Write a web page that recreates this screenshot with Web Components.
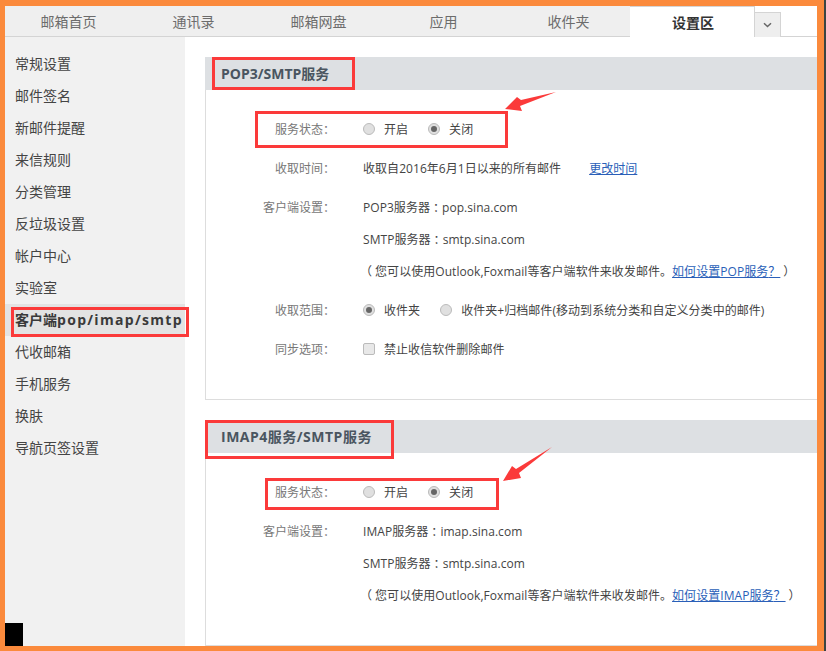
<!DOCTYPE html>
<html lang="zh">
<head>
<meta charset="utf-8">
<title>客户端pop/imap/smtp</title>
<style>
  html, body { margin: 0; padding: 0; }
  body { font: 12px "Open Sans", "Noto Sans CJK SC", sans-serif; color: #444; }
</style>
</head>
<body>
<mail-frame>
  <tab-bar slot="tabs">
    <tab-item>邮箱首页</tab-item>
    <tab-item>通讯录</tab-item>
    <tab-item>邮箱网盘</tab-item>
    <tab-item>应用</tab-item>
    <tab-item>收件夹</tab-item>
    <tab-item active>设置区</tab-item>
  </tab-bar>

  <side-nav slot="side">
    <nav-item>常规设置</nav-item>
    <nav-item>邮件签名</nav-item>
    <nav-item>新邮件提醒</nav-item>
    <nav-item>来信规则</nav-item>
    <nav-item>分类管理</nav-item>
    <nav-item>反垃圾设置</nav-item>
    <nav-item>帐户中心</nav-item>
    <nav-item>实验室</nav-item>
    <nav-item active>客户端<wide-text>pop/imap/smtp</wide-text></nav-item>
    <nav-item>代收邮箱</nav-item>
    <nav-item>手机服务</nav-item>
    <nav-item>换肤</nav-item>
    <nav-item>导航页签设置</nav-item>
  </side-nav>

  <settings-section title="POP3/SMTP服务">
    <setting-row label="服务状态">
      <set-line><radio-opt>开启</radio-opt><radio-opt checked>关闭</radio-opt></set-line>
    </setting-row>
    <setting-row label="收取时间">
      <set-line>收取自2016年6月1日以来的所有邮件<text-link gap="28">更改时间</text-link></set-line>
    </setting-row>
    <setting-row label="客户端设置">
      <set-line>POP3服务器<mid-mark>：</mid-mark>pop.sina.com</set-line>
      <set-line>SMTP服务器<mid-mark>：</mid-mark>smtp.sina.com</set-line>
      <set-line><paren-mark>（</paren-mark>您可以使用Outlook,Foxmail等客户端软件来收发邮件。<text-link>如何设置POP服务<mid-mark>？</mid-mark></text-link><paren-mark>）</paren-mark></set-line>
    </setting-row>
    <setting-row label="收取范围">
      <set-line><radio-opt checked>收件夹</radio-opt><radio-opt>收件夹+归档邮件(移动到系统分类和自定义分类中的邮件)</radio-opt></set-line>
    </setting-row>
    <setting-row label="同步选项">
      <set-line><check-opt>禁止收信软件删除邮件</check-opt></set-line>
    </setting-row>
  </settings-section>

  <settings-section title="IMAP4服务/SMTP服务" style="--title-spacing: .5px">
    <setting-row label="服务状态">
      <set-line><radio-opt>开启</radio-opt><radio-opt checked>关闭</radio-opt></set-line>
    </setting-row>
    <setting-row label="客户端设置">
      <set-line>IMAP服务器<mid-mark>：</mid-mark>imap.sina.com</set-line>
      <set-line>SMTP服务器<mid-mark>：</mid-mark>smtp.sina.com</set-line>
      <set-line><paren-mark>（</paren-mark>您可以使用Outlook,Foxmail等客户端软件来收发邮件。<text-link>如何设置IMAP服务<mid-mark>？</mid-mark></text-link><paren-mark>）</paren-mark></set-line>
    </setting-row>
  </settings-section>

  <!-- red markup drawn over the screenshot -->
  <note-box slot="notes" x="212" y="57" w="143" h="33"></note-box>
  <note-box slot="notes" x="255" y="111" w="253" h="37"></note-box>
  <note-box slot="notes" x="11" y="307" w="178" h="30"></note-box>
  <note-box slot="notes" x="205" y="420" w="188.5" h="39"></note-box>
  <note-box slot="notes" x="265" y="478" w="234" h="32"></note-box>
  <note-arrow slot="notes" points="505,109 517,97 521,100 556,92 520,106 522,111"></note-arrow>
  <note-arrow slot="notes" points="503,481 512,466 516,469 552,447 519,473 521,478"></note-arrow>
</mail-frame>

<script>
// small helper so each class only has to say what its shadow root holds
class BaseElement extends HTMLElement {
  get html() { return `<slot></slot>`; }
  get css() { return ``; }

  constructor() {
    super();
    this.root = this.attachShadow({ mode: 'open' });
  }

  connectedCallback() {
    this.root.innerHTML = `<style>${this.css}</style>` + this.html;
  }
}

class MailFrame extends BaseElement {
  get css() {
    return `
      :host { display: block; position: relative; box-sizing: border-box; width: 826px; height: 651px;
        padding: 6px 7px 5px 5px; background: #fb8a3c; border-right: 2px solid #3c4442; overflow: hidden; }
      .page { display: flex; flex-direction: column; height: 100%; background: #fff; }
      .body { flex: 1; display: flex; min-height: 0; }
      main { flex: 1; min-width: 0; padding: 20px 0 0 20px; display: flex; flex-direction: column; gap: 20px; }
    `;
  }
  get html() {
    return `
      <div class="page">
        <slot name="tabs"></slot>
        <div class="body">
          <slot name="side"></slot>
          <main><slot></slot></main>
        </div>
      </div>
      <slot name="notes"></slot>
    `;
  }
}

class TabBar extends BaseElement {
  get css() {
    return `
      :host { display: flex; height: 31px; box-sizing: border-box; border-bottom: 1px solid #d4d4d4; }
      .more { width: 26px; height: 25px; margin-top: 6px; box-sizing: border-box; background: #eee;
        border: 1px solid #d4d4d4; border-left: 0; border-bottom: 0; display: flex; align-items: center; justify-content: center; }
    `;
  }
  get html() {
    return `<slot></slot>
      <div class="more"><svg width="9" height="6" viewBox="0 0 9 6"><path d="M1 1.2 L4.5 4.5 L8 1.2" fill="none" stroke="#666" stroke-width="1.5"/></svg></div>`;
  }
}

class TabItem extends BaseElement {
  get css() {
    return `
      :host { display: flex; align-items: center; justify-content: center; width: 125px; height: 30px;
        box-sizing: border-box; padding-left: 2px; background: #efefef; color: #6c6c6c; font-size: 14px; }
      :host([active]) { background: #fff; color: #333; font-weight: bold; border-right: 1px solid #d4d4d4;
        border-top: 1px solid #d4d4d4; height: 31px; }
    `;
  }
}

class SideNav extends BaseElement {
  get css() {
    return `
      :host { display: flex; flex-direction: column; width: 180px; flex: none; box-sizing: border-box;
        padding-top: 11px; background: #f1f1f1; }
      .stub { margin-top: auto; width: 18px; height: 23px; background: #000; }
    `;
  }
  get html() { return `<slot></slot><div class="stub"></div>`; }
}

class NavItem extends BaseElement {
  get css() {
    return `
      :host { display: flex; align-items: center; height: 32px; box-sizing: border-box; padding: 0 0 2px 10px;
        font-size: 14px; color: #444; white-space: nowrap; }
      :host([active]) { background: #e3e3e3; font-weight: bold; color: #3a3a3a; }
    `;
  }
}

class WideText extends BaseElement {
  get css() {
    return `:host { letter-spacing: 1.3px; }`;
  }
}

class SettingsSection extends BaseElement {
  get css() {
    return `
      :host { display: block; }
      h2 { margin: 0; height: 33px; line-height: 34px; padding-left: 16px; background: #dde0e3; color: #4a5560;
        font-size: 14px; font-weight: bold; letter-spacing: var(--title-spacing, 0); }
      .box { display: flex; flex-direction: column; gap: 7px; padding: 23px 0 34px; border-left: 1px solid #ddd; border-bottom: 1px solid #ddd; }
    `;
  }
  get html() {
    return `<h2>${this.getAttribute('title')}</h2><div class="box"><slot></slot></div>`;
  }
}

class SettingRow extends BaseElement {
  get css() {
    return `
      :host { display: grid; grid-template-columns: 129px 1fr; column-gap: 28px; }
      .label { height: 32px; line-height: 32px; text-align: right; color: #777; }
      .label span { font-family: "Noto Sans CJK TC", sans-serif; }
    `;
  }
  get html() {
    return `<div class="label">${this.getAttribute('label')}<span>：</span></div><div><slot></slot></div>`;
  }
}

class SetLine extends BaseElement {
  get css() {
    return `:host { display: flex; align-items: center; height: 32px; white-space: pre; color: #444; letter-spacing: .05px; }`;
  }
}

// colon and question mark sit in the middle of their cell, as the TC face draws them
class MidMark extends BaseElement {
  get css() {
    return `:host { font-family: "Noto Sans CJK TC", sans-serif; }`;
  }
}

// half-width bracket glyph, padded back to a full cell so it stays centred
class ParenMark extends BaseElement {
  get css() {
    return `:host { font-feature-settings: "halt"; padding: 0 3px; }`;
  }
}

class RadioOpt extends BaseElement {
  get css() {
    return `
      :host { display: inline-flex; align-items: center; gap: 9px; margin-right: 20px; }
      i { width: 12px; height: 12px; box-sizing: border-box; border-radius: 50%; background: #e0e0e0; border: 1px solid #bbb;
        display: flex; align-items: center; justify-content: center; }
      b { width: 6px; height: 6px; border-radius: 50%; background: #666; }
    `;
  }
  get html() {
    return `<i>${this.hasAttribute('checked') ? '<b></b>' : ''}</i><slot></slot>`;
  }
}

class CheckOpt extends BaseElement {
  get css() {
    return `
      :host { display: inline-flex; align-items: center; gap: 9px; }
      i { width: 12px; height: 12px; box-sizing: border-box; border-radius: 2px; background: #e8e8e8; border: 1px solid #bbb; }
    `;
  }
  get html() { return `<i></i><slot></slot>`; }
}

class TextLink extends BaseElement {
  get css() {
    return `:host { color: #2a5fb8; text-decoration: underline; margin-left: ${this.getAttribute('gap') || 0}px; }`;
  }
}

class NoteBox extends BaseElement {
  get css() {
    const a = n => this.getAttribute(n);
    return `:host { position: absolute; left: ${a('x')}px; top: ${a('y')}px; width: ${a('w')}px; height: ${a('h')}px;
      box-sizing: border-box; border: 3px solid #fb3a3a; pointer-events: none; }`;
  }
  get html() { return ``; }
}

class NoteArrow extends BaseElement {
  get css() {
    return `:host { position: absolute; left: 0; top: 0; pointer-events: none; }`;
  }
  get html() {
    return `<svg width="826" height="651" style="display:block"><polygon points="${this.getAttribute('points')}" fill="#fb3a3a"/></svg>`;
  }
}

customElements.define('mail-frame', MailFrame);
customElements.define('tab-bar', TabBar);
customElements.define('tab-item', TabItem);
customElements.define('side-nav', SideNav);
customElements.define('nav-item', NavItem);
customElements.define('wide-text', WideText);
customElements.define('settings-section', SettingsSection);
customElements.define('setting-row', SettingRow);
customElements.define('set-line', SetLine);
customElements.define('mid-mark', MidMark);
customElements.define('paren-mark', ParenMark);
customElements.define('radio-opt', RadioOpt);
customElements.define('check-opt', CheckOpt);
customElements.define('text-link', TextLink);
customElements.define('note-box', NoteBox);
customElements.define('note-arrow', NoteArrow);
</script>
</body>
</html>
